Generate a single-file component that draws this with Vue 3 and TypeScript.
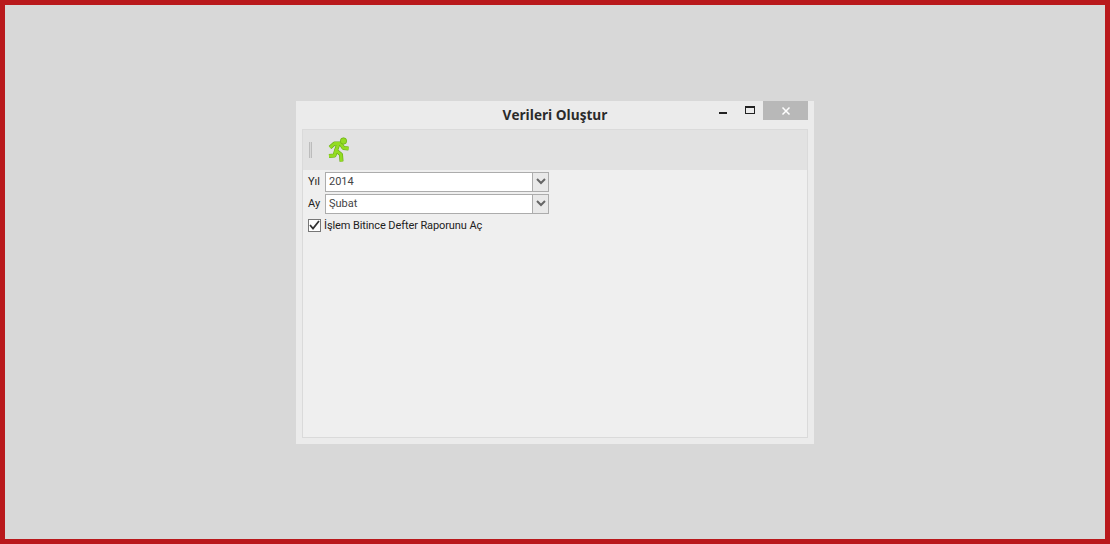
<script setup lang="ts">
const fields = [
  { label: 'Yıl', value: '2014' },
  { label: 'Ay', value: 'Şubat' },
]
</script>

<template>
  <div class="screen">
    <div class="window">
      <div class="titlebar">
        <span class="title">Verileri Oluştur</span>
        <div class="controls">
          <span class="btn-min"></span>
          <span class="btn-max"></span>
          <span class="btn-close">
            <svg width="10" height="10" viewBox="0 0 10 10">
              <path d="M1.500 1.500l7 7M8.500 1.500l-7 7" stroke="#fff" stroke-width="1.500" fill="none" />
            </svg>
          </span>
        </div>
      </div>
      <div class="panel">
        <div class="toolbar">
          <span class="grip"></span>
          <svg class="run-icon" width="22" height="26" viewBox="0 0 22 26">
            <g fill="none" stroke-linejoin="round">
              <path
                d="M2 10.500l4.500-4h6l3 4.500 5 .5M10.500 6.500l-2.500 7 5 4 .5 7M8 13.500l-1.500 5-5.500 .5"
                stroke="#68ab14"
                stroke-width="4"
              />
              <path
                d="M2 10.500l4.500-4h6l3 4.500 5 .5M10.500 6.500l-2.500 7 5 4 .5 7M8 13.500l-1.500 5-5.500 .5"
                stroke="#93dc22"
                stroke-width="2.800"
              />
            </g>
            <circle cx="15.500" cy="4" r="3.200" fill="#93dc22" stroke="#68ab14" stroke-width=".7" />
          </svg>
        </div>
        <div class="form">
          <div v-for="f in fields" :key="f.label" class="row">
            <span class="label">{{ f.label }}</span>
            <div class="combo">
              <span class="value">{{ f.value }}</span>
              <span class="arrow">
                <svg width="10" height="7" viewBox="0 0 10 7">
                  <path d="M1 1l4 4 4-4" stroke="#666" stroke-width="2" fill="none" />
                </svg>
              </span>
            </div>
          </div>
          <label class="check-row">
            <span class="check">
              <svg width="11" height="10" viewBox="0 0 11 10">
                <path d="M1 5l3 3.500 6-7.500" stroke="#333" stroke-width="1.800" fill="none" />
              </svg>
            </span>
            <span class="check-text">İşlem Bitince Defter Raporunu Aç</span>
          </label>
        </div>
      </div>
    </div>
  </div>
</template>

<style>
html,
body {
  margin: 0;
}
</style>

<style scoped>
.screen {
  box-sizing: border-box;
  width: 1110px;
  height: 544px;
  background: #d8d8d8;
  border: 5px solid #b9191c;
  padding-top: 96px;
  padding-left: 291px;
  font-family: "Open Sans", "Noto Sans", sans-serif;
  color: #222;
}

.window {
  box-sizing: border-box;
  width: 518px;
  height: 343px;
  background: #ebebeb;
  padding: 0 6px 6px;
  display: flex;
  flex-direction: column;
}

.titlebar {
  height: 28px;
  flex: none;
  display: flex;
  justify-content: center;
  position: relative;
}

.title {
  font-size: 13.600px;
  font-weight: 700;
  line-height: 27px;
  color: #2a2a2a;
}

.controls {
  position: absolute;
  top: 0;
  right: 0;
  display: flex;
  align-items: flex-start;
}

.btn-min {
  width: 8px;
  height: 2px;
  background: #222;
  margin-top: 11px;
  margin-right: 18px;
}

.btn-max {
  box-sizing: border-box;
  width: 10px;
  height: 8px;
  border: 1px solid #222;
  border-top-width: 2px;
  margin-top: 5px;
  margin-right: 8px;
}

.btn-close {
  width: 45px;
  height: 19px;
  background: #b8b8b8;
  display: flex;
  align-items: center;
  justify-content: center;
}

.panel {
  flex: 1;
  background: #efefef;
  border: 1px solid #dadada;
  display: flex;
  flex-direction: column;
}

.toolbar {
  height: 40px;
  flex: none;
  background: #e2e2e2;
  display: flex;
  align-items: center;
  padding-left: 6px;
}

.grip {
  box-sizing: border-box;
  width: 3px;
  height: 16px;
  border-left: 1px solid #bcbcbc;
  border-right: 1px solid #bcbcbc;
  background: #d8d8d8;
}

.run-icon {
  margin-left: 16px;
}

.form {
  padding: 1px 0 0 5px;
  display: flex;
  flex-direction: column;
  gap: 1px;
  font-family: Roboto, "Open Sans", sans-serif;
}

.row {
  display: flex;
  align-items: center;
  height: 21px;
  font-size: 11px;
}

.label {
  width: 17px;
}

.combo {
  box-sizing: border-box;
  width: 224px;
  height: 20px;
  background: #fff;
  border: 1px solid #acacac;
  display: flex;
  align-items: center;
  justify-content: space-between;
}

.value {
  padding-left: 3px;
  color: #444;
}

.arrow {
  box-sizing: border-box;
  width: 16px;
  height: 100%;
  background: #e9e9e9;
  border-left: 1px solid #acacac;
  display: flex;
  align-items: center;
  justify-content: center;
}

.check-row {
  display: flex;
  align-items: center;
  gap: 3px;
  height: 20px;
  font-size: 11px;
}

.check {
  box-sizing: border-box;
  width: 13px;
  height: 13px;
  background: #fff;
  border: 1px solid #777;
  display: flex;
  align-items: center;
  justify-content: center;
}

.check-text {
  letter-spacing: -0.1px;
}
</style>
